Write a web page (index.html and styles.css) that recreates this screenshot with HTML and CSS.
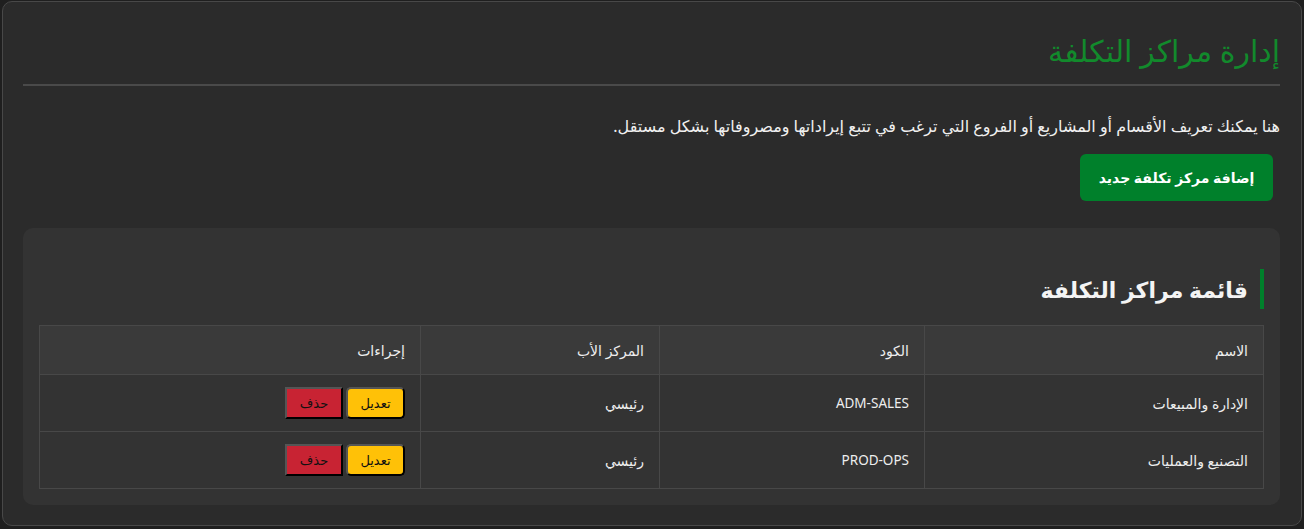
FILE: index.html
```html
<!DOCTYPE html>
<html lang="ar" dir="rtl">
<head>
<meta charset="utf-8">
<title>إدارة مراكز التكلفة</title>
<link rel="stylesheet" href="styles.css">
</head>
<body>
<div class="card">
  <h1 class="title">إدارة مراكز التكلفة</h1>
  <p class="desc">هنا يمكنك تعريف الأقسام أو المشاريع أو الفروع التي ترغب في تتبع إيراداتها ومصروفاتها بشكل مستقل.</p>
  <div class="actions"><button class="btn-add">إضافة مركز تكلفة جديد</button></div>
  <div class="panel">
    <h2 class="panel-title">قائمة مراكز التكلفة</h2>
    <table class="tbl">
      <thead>
        <tr><th class="c-name">الاسم</th><th class="c-code">الكود</th><th class="c-parent">المركز الأب</th><th>إجراءات</th></tr>
      </thead>
      <tbody>
        <tr><td>الإدارة والمبيعات</td><td class="code">ADM-SALES</td><td>رئيسي</td><td><button class="btn-edit">تعديل</button><button class="btn-del">حذف</button></td></tr>
        <tr><td>التصنيع والعمليات</td><td class="code">PROD-OPS</td><td>رئيسي</td><td><button class="btn-edit">تعديل</button><button class="btn-del">حذف</button></td></tr>
      </tbody>
    </table>
  </div>
</div>
</body>
</html>
```
FILE: styles.css
```css
html, body { margin: 0; padding: 0; }
body {
  background: #1f1f1f;
  padding: 1px 2px 3px 2px;
  font-family: "Noto Sans", "DejaVu Sans", sans-serif;
  color: #eee;
}
.card {
  background: #2b2b2b;
  border: 1px solid #484848;
  border-radius: 10px;
  padding: 30px 21px 20px 20px;
  height: 473px;
}
.title {
  margin: 0;
  color: #128a2c;
  font-size: 30px;
  font-weight: normal;
  line-height: 38px;
  padding-bottom: 14px;
  border-bottom: 2px solid #4a4a4a;
}
.desc {
  margin: 27px 0 0 0;
  font-size: 16px;
  line-height: 26px;
  color: #f0f0f0;
}
.actions { margin-top: 15px; display: flex; }
.btn-add {
  margin-right: 7px;
  background: #00802b;
  color: #fff;
  border: none;
  border-radius: 6px;
  width: 193px;
  height: 47px;
  font-family: inherit;
  font-size: 14px;
  font-weight: bold;
}
.panel {
  margin-top: 27px;
  margin-left: 0;
  background: #333333;
  border-radius: 10px;
  padding: 41px 16px 16px 16px;
  height: 220px;
}
.panel-title {
  margin: 0 0 16px 0;
  font-size: 22px;
  font-weight: bold;
  line-height: 40px;
  border-right: 4px solid #00802b;
  padding-right: 12px;
  color: #f4f4f4;
}
.tbl {
  width: 100%;
  border-collapse: collapse;
  font-size: 14px;
}
.tbl th, .tbl td {
  border: 1px solid #484848;
  text-align: right;
  padding: 0 15px;
  color: #eee;
}
.tbl th { background: #3a3a3a; font-weight: normal; height: 48px; }
.tbl td { height: 56px; }
.c-name { width: 308px; }
.c-code { width: 234px; }
.c-parent { width: 208px; }
.code { font-size: 13.5px; }
.btn-edit, .btn-del {
  font-family: inherit;
  font-size: 13px;
  color: #111;
  height: 32px;
  width: 59px;
  border: 2px outset #555;
  border-right-color: #000;
  border-bottom-color: #000;
  vertical-align: middle;
}
.btn-edit { background: #ffc107; border-radius: 5px; }
.btn-del { background: #c82333; margin-right: 3px; width: 58px; }
```
